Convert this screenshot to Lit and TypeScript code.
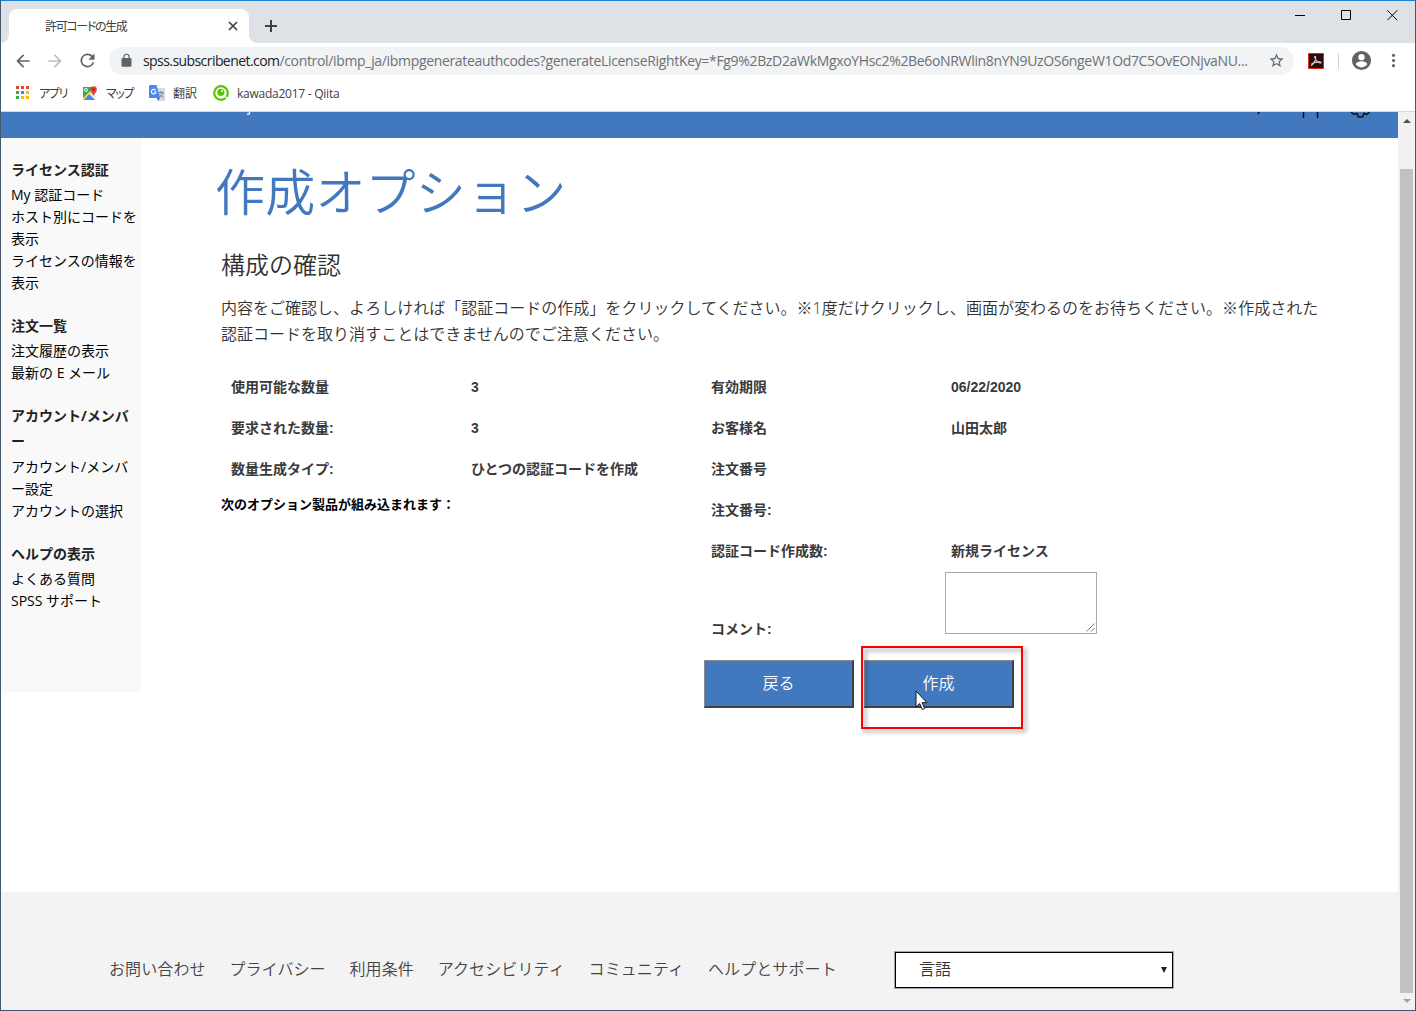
import { LitElement, html, css, svg } from "lit";
import { customElement } from "lit/decorators.js";

const icon = (size: number, body: unknown, color = "#5f6368") =>
  html`<svg width=${size} height=${size} viewBox="0 0 24 24" fill=${color}>${body}</svg>`;

const base = css`
  * { box-sizing: border-box; }
  svg { display: block; flex: none; }
`;

@customElement("browser-chrome")
class BrowserChrome extends LitElement {
  static styles = [base, css`
    :host { display: block; height: 111px; background: #fff; border-bottom: 1px solid #d5d7da;
      font-family: "Open Sans", "Noto Sans CJK JP", sans-serif; color: #3c4043; }
    .tabs { height: 42px; background: #dee1e6; display: flex; align-items: flex-end; padding-left: 8px; }
    .tab { width: 240px; height: 34px; background: #fff; border-radius: 8px 8px 0 0; display: flex;
      align-items: center; justify-content: space-between; padding: 0 11px 0 36px; font-size: 12px; position: relative; }
    .tab::before, .tab::after { content: ""; position: absolute; bottom: 0; width: 8px; height: 8px; }
    .tab::before { left: -8px; background: radial-gradient(circle at 0 0, #dee1e6 7.5px, #fff 8px); }
    .tab::after { right: -8px; background: radial-gradient(circle at 100% 0, #dee1e6 7.5px, #fff 8px); }
    .tight { letter-spacing: -1.35px; font-feature-settings: "palt"; white-space: nowrap; }
    .plus { margin: 0 auto 10px 15px; }
    .win { display: flex; gap: 35px; margin: 0 17px 22px 0; }
    .bar { height: 35px; display: flex; align-items: center; padding-left: 12px; }
    .bar .fwd { margin-left: 12px; }
    .bar .reload { margin-left: 12px; }
    .omni { margin-left: 11px; width: 1185px; height: 28px; border-radius: 14px; background: #f1f3f4;
      display: flex; align-items: center; padding: 0 9px 0 10px; font-size: 14px; white-space: nowrap; }
    .lock { margin-right: 9px; }
    .host { color: #202124; letter-spacing: -0.57px; }
    .path { color: #6d7175; letter-spacing: -0.332px; }
    .star { margin-left: auto; }
    .pdf { margin-left: 14px; }
    .sep { width: 1px; height: 16px; background: #cfd1d4; margin: 0 11px 0 14px; }
    .dots { margin-left: 11px; }
    .marks { height: 30px; display: flex; align-items: center; padding-left: 14px; font-size: 12px; white-space: nowrap; }
    .mark { display: flex; align-items: center; gap: 8px; }
    .m1 { width: 67px; } .m2 { width: 67px; } .m3 { width: 64px; }
    .qi { letter-spacing: -0.25px; }
  `];
  render() {
    const dots = ["#ea4335", "#ea4335", "#ea4335", "#34a853", "#4285f4", "#fbbc05", "#34a853", "#fbbc05", "#fbbc05"];
    return html`
      <div class="tabs">
        <div class="tab"><span class="tight">許可コードの生成</span>
          <svg width="10" height="10" viewBox="0 0 10 10" stroke="#3c4043" stroke-width="1.7"><path d="M1 1l8 8M9 1l-8 8"/></svg></div>
        <svg class="plus" width="14" height="14" viewBox="0 0 14 14" stroke="#3c4043" stroke-width="2"><path d="M7 1v12M1 7h12"/></svg>
        <div class="win">
          <svg width="11" height="11" viewBox="0 0 11 11"><path d="M0 6.5h10" stroke="#000" transform="translate(0 -1)"/></svg>
          <svg width="11" height="11" viewBox="0 0 11 11" fill="none" stroke="#000"><path d="M.5 .5h9v9h-9z"/></svg>
          <svg width="11" height="11" viewBox="0 0 11 11" stroke="#000"><path d="M.3 .3l10 10M10.3 .3l-10 10"/></svg>
        </div>
      </div>
      <div class="bar">
        ${icon(20, svg`<path d="M20 11H7.8l5.6-5.6L12 4l-8 8 8 8 1.4-1.4L7.8 13H20z"/>`)}
        <span class="fwd">${icon(20, svg`<path d="M12 4l-1.4 1.4 5.6 5.6H4v2h12.2l-5.6 5.6L12 20l8-8z"/>`, "#bcbec0")}</span>
        <span class="reload">${icon(21, svg`<path d="M17.65 6.35A8 8 0 1 0 19.73 14h-2.08A6 6 0 1 1 12 6c1.66 0 3.14.69 4.22 1.78L13 11h7V4z"/>`)}</span>
        <div class="omni">
          <span class="lock">${icon(15, svg`<path d="M18 8h-1V6A5 5 0 0 0 7 6v2H6a2 2 0 0 0-2 2v10c0 1.1.9 2 2 2h12a2 2 0 0 0 2-2V10a2 2 0 0 0-2-2zM8.9 6a3.1 3.1 0 0 1 6.2 0v2H8.9z"/>`)}</span>
          <span class="host">spss.subscribenet.com</span><span class="path">/control/ibmp_ja/ibmpgenerateauthcodes?generateLicenseRightKey=*Fg9%2BzD2aWkMgxoYHsc2%2Be6oNRWlin8nYN9UzOS6ngeW1Od7C5OvEONjvaNU...</span>
          <span class="star">${icon(17, svg`<path d="M22 9.24l-7.19-.62L12 2 9.19 8.63 2 9.24l5.46 4.73L5.82 21 12 17.27 18.18 21l-1.63-7.03zM12 15.4l-3.76 2.27 1-4.28-3.32-2.88 4.38-.38L12 6.1l1.71 4.04 4.38.38-3.32 2.88 1 4.28z"/>`)}</span>
        </div>
        <svg class="pdf" width="16" height="16" viewBox="0 0 16 16" fill="none"><path d="M.5 .5h15v15H.5z" fill="#2b0b0c" stroke="#e02a0c"/><path d="M3 12.500c2.300-1 4.600-5 4.700-8.300.1-1.300-1.300-1.300-1 0C7.400 7 9.900 9.800 12.200 10c1.400 0 .8-1.200-1-1.100C8.500 9 5 9.900 3.300 11.500" stroke="#ddd2d2" stroke-width="1.100"/></svg>
        <div class="sep"></div>
        ${icon(23, svg`<path d="M12 2a10 10 0 1 0 0 20 10 10 0 0 0 0-20zm0 3.200a3.300 3.300 0 1 1 0 6.600 3.300 3.300 0 0 1 0-6.600zM12 19.200a7.200 7.200 0 0 1-6-3.200c0-2 4-3.100 6-3.100s6 1.100 6 3.100a7.200 7.200 0 0 1-6 3.200z"/>`)}
        <span class="dots">${icon(19, svg`<circle cx="12" cy="5.500" r="2"/><circle cx="12" cy="12" r="2"/><circle cx="12" cy="18.500" r="2"/>`)}</span>
      </div>
      <div class="marks">
        <div class="mark m1"><svg width="16" height="16" viewBox="0 0 16 16">${dots.map((c, i) => svg`<rect x=${1 + (i % 3) * 5} y=${1 + Math.floor(i / 3) * 5} width="3" height="3" fill=${c}/>`)}</svg><span class="tight">アプリ</span></div>
        <div class="mark m2"><svg width="16" height="16" viewBox="0 0 16 16"><path d="M1 2h12v13H1z" fill="#34a853"/><path d="M1 15l6-6 6 6z" fill="#4285f4"/><path d="M7 9l6-6v12z" fill="#e8e8e8"/><path d="M1 13L12 2h1.500L2 15H1z" fill="#fbd04b"/><circle cx="4" cy="5" r="1.500" fill="none" stroke="#fff"/><path d="M11.500 11c-.5-2.500-3.200-3.500-3.200-6.600a3.200 3.200 0 0 1 6.500 0c0 3.100-2.800 4.100-3.300 6.600z" fill="#ea4335"/><circle cx="11.500" cy="4.400" r="1.200" fill="#8c2119"/></svg><span class="tight">マップ</span></div>
        <div class="mark m3"><svg width="16" height="16" viewBox="0 0 16 16"><path d="M6 3h10v13H9z" fill="#d8dadd"/><path d="M9.500 7.500h5M12 6v1.500M14 8c-.5 2-2 3.500-4 4.500M10.500 9l4 4" stroke="#607d8b" fill="none"/><path d="M1 0h6.500l3.500 13H1a1 1 0 0 1-1-1V1a1 1 0 0 1 1-1z" fill="#4a88f0"/><path d="M8 13h3l-2 3z" fill="#3367d6"/><path d="M6.500 5.200A2.300 2.300 0 1 0 7 7H4.900" stroke="#fff" stroke-width="1.100" fill="none"/></svg><span>翻訳</span></div>
        <div class="mark"><svg width="16" height="16" viewBox="0 0 16 16" fill="none"><circle cx="8" cy="8" r="6.800" stroke="#55c500" stroke-width="2.200"/><circle cx="7.800" cy="7.300" r="3.600" fill="#55c500"/><circle cx="9" cy="6" r="1" fill="#fff"/><path d="M10.500 10.500l4.500 3.500" stroke="#fff" stroke-width="1.300"/></svg><span class="qi">kawada2017 - Qiita</span></div>
      </div>`;
  }
}

@customElement("side-menu")
class SideMenu extends LitElement {
  static styles = [base, css`
    :host { display: block; width: 140px; height: 554px; background: #f9f9f9; padding: 19px 0 0 10px;
      font: 14px/22px "Open Sans", "Noto Sans CJK JP", sans-serif; color: #000; }
    h3 { margin: 0 0 2px; font-size: 14px; line-height: 25px; color: #222; font-weight: 700; }
    h3 div + div { margin-bottom: 3px; }
    section { margin-bottom: 19px; white-space: nowrap; }
  `];
  render() {
    const groups = [
      [["ライセンス認証"], ["My 認証コード", "ホスト別にコードを", "表示", "ライセンスの情報を", "表示"]],
      [["注文一覧"], ["注文履歴の表示", "最新の E メール"]],
      [["アカウント/メンバ", "ー"], ["アカウント/メンバ", "ー設定", "アカウントの選択"]],
      [["ヘルプの表示"], ["よくある質問", "SPSS サポート"]],
    ];
    return groups.map(([h, items]) => html`<section><h3>${h.map((t) => html`<div>${t}</div>`)}</h3>${items.map((t) => html`<div>${t}</div>`)}</section>`);
  }
}

@customElement("app-root")
class AppRoot extends LitElement {
  static styles = [base, css`
    :host { display: block; box-sizing: border-box; width: 1416px; height: 1011px; overflow: hidden; background: #fff;
      border: 1px solid #43586d; border-top-color: #1883d7;
      font-family: "Open Sans", "Noto Sans CJK JP", sans-serif; color: #323232; }
    .view { display: flex; height: 898px; }
    .page { width: 1397px; }
    .head { height: 26px; background: #4178be; }
    .head svg { width: 1397px; height: 26px; }
    .mid { height: 754px; display: flex; }
    main { padding-left: 75px; width: 1257px; }
    h1 { margin: 17px 0 0 -1px; font-size: 50px; line-height: 74px; font-weight: 350; color: #4178be; letter-spacing: 0.2px; }
    h2 { margin: 18px 0 0 5px; font-size: 24px; line-height: 36px; font-weight: 350; }
    p { margin: 12px 0 0 5px; font-size: 16px; line-height: 26px; font-weight: 350; white-space: nowrap; letter-spacing: 0.015px; }
    .cols { display: flex; margin: 20px 0 0 5px; font: 700 14px/41px "Liberation Sans", "Noto Sans CJK JP", sans-serif; color: #3a3a3a; }
    .col { width: 480px; }
    .row { display: grid; grid-template-columns: 240px 240px; height: 41px; padding-left: 10px; }
    .note { font-size: 13px; line-height: 30px; color: #000; }
    .comment { display: flex; align-items: flex-end; padding-left: 10px; height: 62px; }
    .comment span { width: 234px; line-height: 10px; }
    .area { width: 152px; height: 62px; border: 1px solid #a9a9a9; display: flex; align-items: flex-end; justify-content: flex-end; padding: 1px; }
    .buttons { display: flex; gap: 10px; margin: 26px 0 0 3px; }
    .btn { width: 150px; height: 48px; background: #4178be; border: solid; border-width: 1px 2px 2px 1px;
      border-color: #8c8c8c #414141 #414141 #8c8c8c; color: #fff; font: 350 16px/42px "Noto Sans CJK JP", sans-serif; text-align: center; position: relative; padding: 0; }
    .mark { position: absolute; left: -4px; top: -15px; width: 162px; height: 83px; border: 2px solid #f00; filter: drop-shadow(3px 3px 2px rgba(0,0,0,.4)); }
    .cursor { position: absolute; left: 50px; top: 29px; }
    footer { height: 118px; background: #f3f3f3; display: flex; align-items: flex-start; padding: 59px 0 0 108px; font-size: 16px; font-weight: 350; line-height: 36px; }
    .links { display: flex; gap: 23.800px; width: 785px; white-space: nowrap; letter-spacing: 0.1px; color: #444; }
    .select { width: 280px; height: 38px; border: 1px solid #a6a6a6; outline: 1px solid #000; outline-offset: -2px; background: #fff;
      display: flex; justify-content: space-between; padding: 0 6px 0 24px; line-height: 34px; }
    .select svg { margin-top: 15px; }
    .scroll { width: 17px; background: #f1f1f1; display: flex; flex-direction: column; align-items: center; padding: 7px 0 6px; }
    .thumb { width: 13px; height: 824px; background: #c1c1c1; margin: 46px 0 6px; }
  `];
  render() {
    const left = [["使用可能な数量", "3"], ["要求された数量:", "3"], ["数量生成タイプ:", "ひとつの認証コードを作成"]];
    const right = [["有効期限", "06/22/2020"], ["お客様名", "山田太郎"], ["注文番号", ""], ["注文番号:", ""], ["認証コード作成数:", "新規ライセンス"]];
    const rows = (r: string[][]) => r.map(([a, b]) => html`<div class="row"><span>${a}</span><span>${b}</span></div>`);
    return html`
      <browser-chrome></browser-chrome>
      <div class="view">
        <div class="page">
          <div class="head"><svg viewBox="0 0 1397 26" fill="none" stroke="#111" stroke-width="2">
            <path d="M248.500 0v1q0 1.500-2.500 1.300" stroke="#e8eff8" stroke-width="1.500"/><path d="M1258.500 0l-2 2" stroke-width="1.500"/>
            <path d="M1302.500 0v6M1316.500 0v6" stroke-width="1.500"/>
            <path d="M1350 0l3 2.500 3-1 1.500 3.500h4l1.500-3.500 3 1 2.500-2.500" stroke-width="1.500"/></svg></div>
          <div class="mid">
            <side-menu></side-menu>
            <main>
              <h1>作成オプション</h1>
              <h2>構成の確認</h2>
              <p>内容をご確認し、よろしければ「認証コードの作成」をクリックしてください。※1度だけクリックし、画面が変わるのをお待ちください。※作成された<br>認証コードを取り消すことはできませんのでご注意ください。</p>
              <div class="cols">
                <div class="col">${rows(left)}<div class="note">次のオプション製品が組み込まれます：</div></div>
                <div class="col">${rows(right)}
                  <div class="comment"><span>コメント:</span><div class="area"><svg width="9" height="9" viewBox="0 0 9 9" stroke="#666" stroke-width=".9"><path d="M.5 8.500l8-8M5 8.500l3.500-3.500"/></svg></div></div>
                  <div class="buttons"><div class="btn">戻る</div><div class="btn">作成
                    <div class="mark"></div>
                    <svg class="cursor" width="13" height="21" viewBox="0 0 13 21"><path d="M1 1v16l3.700-3.500 2.600 6 2.400-1-2.600-5.800H12z" fill="#fff" stroke="#101828"/></svg></div></div>
                </div>
              </div>
            </main>
          </div>
          <footer>
            <div class="links">${["お問い合わせ", "プライバシー", "利用条件", "アクセシビリティ", "コミュニティ", "ヘルプとサポート"].map((t) => html`<span>${t}</span>`)}</div>
            <div class="select"><span>言語</span><svg width="6" height="6" viewBox="0 0 6 6"><path d="M0 0h6L3 6z" fill="#222"/></svg></div>
          </footer>
        </div>
        <div class="scroll"><svg width="8" height="4" viewBox="0 0 8 4"><path d="M0 4l4-4 4 4z" fill="#505050"/></svg><div class="thumb"></div><svg width="8" height="4" viewBox="0 0 8 4"><path d="M0 0l4 4 4-4z" fill="#a3a3a3"/></svg></div>
      </div>`;
  }
}
